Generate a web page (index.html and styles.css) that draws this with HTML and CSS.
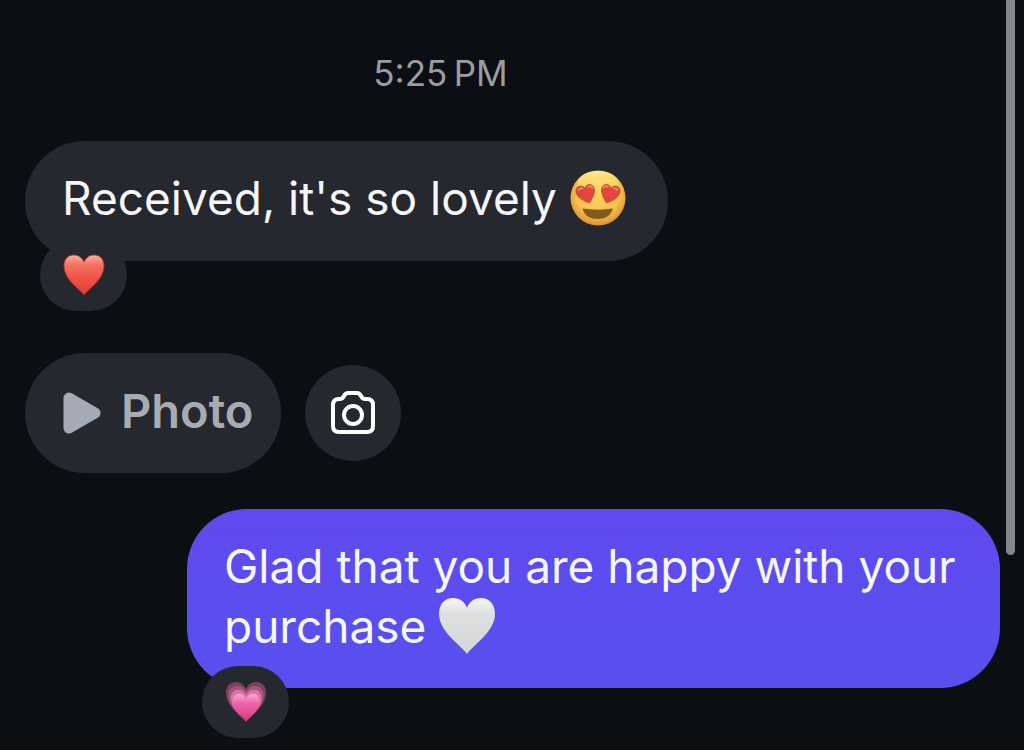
FILE: index.html
```html
<!DOCTYPE html>
<html lang="en">
    <head>
        <meta charset="UTF-8">
        <meta name="viewport" content="width=device-width, initial-scale=1">
        <title>Chat</title>
        <link rel="stylesheet" href="styles.css">
    </head>
    <body>
        <main class="chat">
            <time class="timestamp" datetime="17:25">5:25&#8201;PM</time>

            <div class="message received">
                <p class="bubble">Received, it's so lovely
                    <svg class="emoji" viewBox="0 0 56 56" role="img" aria-label="Heart eyes">
                        <defs>
                            <radialGradient id="face" cx="50%" cy="42%" r="60%">
                                <stop offset="0" stop-color="#fcd65c"/>
                                <stop offset="0.65" stop-color="#f8c24b"/>
                                <stop offset="1" stop-color="#dc8a35"/>
                            </radialGradient>
                            <linearGradient id="shine" x1="0" y1="0" x2="0" y2="1">
                                <stop offset="0" stop-color="#fff3a0" stop-opacity="0.8"/>
                                <stop offset="1" stop-color="#ffe06a" stop-opacity="0"/>
                            </linearGradient>
                        </defs>
                        <circle cx="28" cy="28" r="27.5" fill="url(#face)"/>
                        <ellipse cx="28" cy="14" rx="21" ry="13" fill="url(#shine)"/>
                        <g fill="#e2463c" stroke="#b9502a" stroke-width="0.8">
                            <path d="M19.500 33C14 31 7 28 6 22C5 16 12 14 15 18.500C16 13 24 13 24.500 20C24.500 25 22 29 19.500 33Z"/>
                            <path d="M36.500 33C42 31 49 28 50 22C51 16 44 14 41 18.500C40 13 32 13 31.500 20C31.500 25 34 29 36.500 33Z"/>
                        </g>
                        <path d="M8.500 20Q10 17.500 12.500 18.500M18 17Q21 15 22.500 18M33.500 18Q35 15 38 17M43.500 18.500Q46 17.500 47.500 20" fill="none" stroke="#f98c7e" stroke-width="1.500" stroke-linecap="round"/>
                        <path d="M13 38.500C22 40 34 40 42 38.500C43 38.500 43 39 42.500 40C40 46 35 49 28 49C20 49 15 46 13 40C12.500 39 12.500 38.500 13 38.500Z" fill="#83591e"/>
                    </svg>
                </p>
                <button class="reaction" type="button" aria-label="Red heart reaction">
                    <svg viewBox="0 0 42 42">
                        <defs>
                            <linearGradient id="red" x1="0" y1="0" x2="0" y2="1">
                                <stop offset="0" stop-color="#ffb0a0"/>
                                <stop offset="0.25" stop-color="#f4705f"/>
                                <stop offset="0.6" stop-color="#ef5243"/>
                                <stop offset="1" stop-color="#dc4034"/>
                            </linearGradient>
                        </defs>
                        <path d="M21 41C17 35 1 26 1 12C1 5 5 1 11 1C16 1 19 4 21 8C23 4 26 1 31 1C37 1 41 5 41 12C41 26 25 35 21 41Z" fill="url(#red)" stroke="#b92f28" stroke-width="0.8"/>
                    </svg>
                </button>
            </div>

            <div class="photo-row">
                <button class="bubble photo" type="button">
                    <svg class="play" viewBox="0 0 38 42">
                        <path d="M6 6V36L32 21Z" fill="#a3abb6" stroke="#a3abb6" stroke-width="11" stroke-linejoin="round"/>
                    </svg>
                    Photo
                </button>
                <button class="camera" type="button" aria-label="Camera">
                    <svg viewBox="0 0 46 44">
                        <g fill="none" stroke="#fff" stroke-width="4" stroke-linejoin="round">
                            <path d="M9 8H10C12 8 13 7 14 5C15 3 16 2 18 2H27C29 2 30 3 31 5C32 7 33 8 35 8H37Q43 8 43 14V35Q43 41 37 41H9Q3 41 3 35V14Q3 8 9 8Z"/>
                            <circle cx="23" cy="24" r="9"/>
                        </g>
                    </svg>
                </button>
            </div>

            <div class="message sent">
                <p class="bubble">Glad that you are happy with your purchase
                    <svg class="emoji" viewBox="0 0 56 56" role="img" aria-label="White heart">
                        <defs>
                            <linearGradient id="white" x1="0" y1="0" x2="0" y2="1">
                                <stop offset="0" stop-color="#f5f5f5"/>
                                <stop offset="0.3" stop-color="#dedfe1"/>
                                <stop offset="1" stop-color="#d5d6d8"/>
                            </linearGradient>
                        </defs>
                        <path d="M28 56C23 48 0 34 0 16C0 6 6 0 14 0C21 0 26 4 28 10C30 4 35 0 42 0C50 0 56 6 56 16C56 34 33 48 28 56Z" fill="url(#white)"/>
                    </svg>
                </p>
                <button class="reaction" type="button" aria-label="Growing heart reaction">
                    <svg viewBox="0 0 42 42">
                        <defs>
                            <linearGradient id="pink" x1="0" y1="0" x2="0" y2="1">
                                <stop offset="0" stop-color="#ffa6d6"/>
                                <stop offset="0.35" stop-color="#ee64ac"/>
                                <stop offset="1" stop-color="#d23680"/>
                            </linearGradient>
                            <path id="heart" d="M21 41C17 35 1 26 1 12C1 5 5 1 11 1C16 1 19 4 21 8C23 4 26 1 31 1C37 1 41 5 41 12C41 26 25 35 21 41Z"/>
                        </defs>
                        <use href="#heart" fill="#7d4260"/>
                        <use href="#heart" fill="#a9527b" transform="translate(2.500 4) scale(0.88)"/>
                        <use href="#heart" fill="#d873a6" transform="translate(5 8) scale(0.77)"/>
                        <use href="#heart" fill="url(#pink)" transform="translate(7 12) scale(0.67 0.7)"/>
                    </svg>
                </button>
            </div>
        </main>
        <div class="scroll-thumb"></div>
    </body>
</html>
```
FILE: styles.css
```css
* {
    box-sizing: border-box;
}
body {
    margin: 0;
    background: #0b0f14;
    color: #f5f6f8;
    font-family: Inter, "Liberation Sans", sans-serif;
    font-size: 46px;
    line-height: 60px;
}
button {
    border: none;
    font: inherit;
    cursor: pointer;
}
svg {
    display: block;
}
.chat {
    display: flex;
    flex-direction: column;
    padding: 53px 24px 11px 25px;
}
.timestamp {
    padding-right: 144px;
    color: #9a9da1;
    font-size: 35px;
    line-height: 40px;
    text-align: center;
}
.message {
    display: flex;
    flex-direction: column;
    align-items: flex-start;
}
.received {
    margin-top: 48px;
}
.sent {
    align-self: flex-end;
    max-width: 813px;
    margin-top: 36px;
}
.bubble {
    margin: 0;
    padding: 27px 42px 33px 37px;
    border-radius: 60px;
    background: #25282e;
}
.sent .bubble {
    padding-bottom: 32px;
    background: linear-gradient(#5f4aee, #5750ee);
}
/* 表情与文字同行，不撑高行距 */
.emoji {
    display: inline-block;
    width: 56px;
    height: 56px;
    margin: -4px 0;
    vertical-align: -7px;
}
/* 回应按钮压在气泡底边上 */
.reaction {
    display: grid;
    place-items: center;
    width: 87px;
    height: 72px;
    margin-top: -22px;
    margin-left: 15px;
    padding: 0;
    border-radius: 36px;
    background: #25282e;
    z-index: 1;
}
.reaction svg {
    width: 42px;
    height: 42px;
}
.photo-row {
    display: flex;
    align-items: center;
    gap: 24px;
    margin-top: 42px;
}
.photo {
    display: flex;
    align-items: center;
    gap: 20px;
    padding: 28px 28px 32px 38px;
    color: #a8abb2;
    font-size: 47px;
    font-weight: 600;
}
.play {
    width: 38px;
    height: 42px;
    margin-top: 4px;
}
.camera {
    display: grid;
    place-items: center;
    width: 96px;
    height: 96px;
    padding: 0;
    border-radius: 50%;
    background: #25282e;
}
.camera svg {
    width: 46px;
    height: 44px;
}
/* 滚动条滑块 */
.scroll-thumb {
    position: fixed;
    top: 0;
    right: 9px;
    width: 9px;
    height: 74%;
    border-radius: 0 0 5px 5px;
    background: #858789;
}
```
